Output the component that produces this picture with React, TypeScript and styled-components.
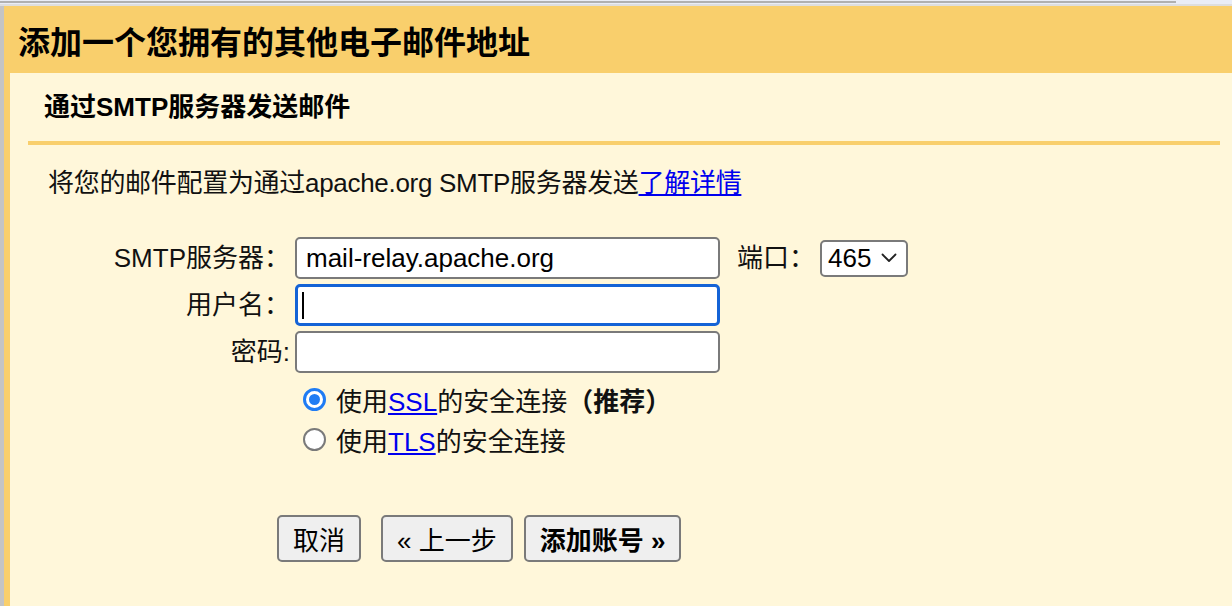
import React from "react";
import styled, { createGlobalStyle } from "styled-components";

const GlobalStyle = createGlobalStyle`
  html, body { margin: 0; padding: 0; }
  body { background: #fff7da; }
  * { box-sizing: border-box; }
`;

const FONT = `"Liberation Sans", "Noto Sans CJK SC", sans-serif`;

const Page = styled.div`
  width: 1232px;
  height: 606px;
  display: flex;
  flex-direction: column;
  overflow: hidden;
  font-family: ${FONT};
  color: #111;
`;

const TopStrip = styled.div`
  height: 6px;
  flex: none;
  background: linear-gradient(to bottom, #eaedf6 0 4px, #dedede 4px 6px);
  padding-top: 1px;
`;

const ScrollLine = styled.div`
  width: 1176px;
  height: 2px;
  background: #b0b0b0;
`;

const Main = styled.div`
  flex: 1;
  display: flex;
  min-height: 0;
`;

const LeftEdge = styled.div`
  width: 4px;
  flex: none;
  background: #c4c4c4;
`;

const Window = styled.div`
  flex: 1;
  display: flex;
  flex-direction: column;
  border-left: 6px solid #f9cf6c;
`;

const Header = styled.div`
  height: 67px;
  flex: none;
  background: #f9cf6c;
  padding: 7px 0 0 8px;
  font-size: 32px;
  font-weight: bold;
  line-height: 60px;
  color: #000;
`;

const Content = styled.div`
  flex: 1;
  background: #fff7da;
  padding: 0 12px 0 18px;
`;

const SubHeader = styled.div`
  padding: 16px 0 16px 16px;
  line-height: 36px;
  font-size: 26px;
  font-weight: bold;
  color: #000;
  border-bottom: 4px solid #f9cf6c;
`;

const Intro = styled.p`
  margin: 20px 0 0;
  padding-left: 20px;
  font-size: 26px;
  line-height: 36px;
  letter-spacing: -0.3px;
`;

const Link = styled.a`
  color: #0000ee;
  text-decoration: underline;
`;

const FormGrid = styled.div`
  margin-top: 36px;
  display: grid;
  grid-template-columns: 262px 425px auto auto;
  column-gap: 5px;
  row-gap: 5px;
  align-items: center;
  justify-content: start;
`;

const Label = styled.label<{ $pad?: number }>`
  text-align: right;
  font-size: 26px;
  line-height: 36px;
  white-space: nowrap;
  margin-left: ${(p) => p.$pad ?? 0}px;
`;

const FieldWrap = styled.div`
  position: relative;
  height: 42px;
`;

const TextInput = styled.input<{ $focused?: boolean }>`
  width: 425px;
  height: 42px;
  border: ${(p) => (p.$focused ? "3px solid #1463d6" : "2px solid #7a7a7a")};
  border-radius: 5px;
  background: #fff;
  padding: 0 ${(p) => (p.$focused ? 8 : 9)}px;
  font-family: ${FONT};
  font-size: 26px;
  color: #000;
  outline: none;
`;

const Caret = styled.span`
  position: absolute;
  left: 7px;
  top: 8px;
  width: 2px;
  height: 27px;
  background: #000;
`;

const PortSelect = styled.div`
  display: inline-flex;
  align-items: center;
  width: 88px;
  height: 37px;
  border: 2px solid #7a7a7a;
  border-radius: 5px;
  background: #fff;
  padding: 0 0 0 6px;
  gap: 10px;
  font-size: 26px;
  color: #000;
`;

const RadioList = styled.div`
  grid-column: 2 / span 3;
  margin-top: 1px;
  display: flex;
  flex-direction: column;
`;

const RadioRow = styled.label`
  height: 40px;
  display: flex;
  align-items: center;
  gap: 10px;
  padding-left: 8px;
  font-size: 26px;
  white-space: nowrap;
`;

const Radio = styled.input.attrs({ type: "radio" })`
  appearance: none;
  margin: 0;
  flex: none;
  width: 23px;
  height: 23px;
  border-radius: 50%;
  background: #fff;
  border: 2px solid #7a7a7a;
  display: grid;
  place-items: center;
  &:checked {
    border: 3px solid #1f7cf4;
  }
  &:checked::after {
    content: "";
    width: 11px;
    height: 11px;
    border-radius: 50%;
    background: #1f7cf4;
  }
`;

const Strong = styled.b`
  font-weight: bold;
`;

const ButtonRow = styled.div`
  margin-top: 56px;
  padding-left: 249px;
  display: flex;
  align-items: center;
`;

const Button = styled.button<{ $bold?: boolean; $gap?: number }>`
  height: 47px;
  padding: 0 14px;
  margin-right: ${(p) => p.$gap ?? 0}px;
  border: 2px solid #7a7a7a;
  border-radius: 5px;
  background: #efefef;
  font-family: ${FONT};
  font-size: 26px;
  font-weight: ${(p) => (p.$bold ? "bold" : "normal")};
  color: #000;
  white-space: nowrap;
`;

const Chevron = () => (
  <svg width="16" height="10" viewBox="0 0 16 10" fill="none">
    <path d="M1.5 1.5 L8 8 L14.5 1.5" stroke="#222" strokeWidth="1.8" strokeLinecap="round" strokeLinejoin="round" />
  </svg>
);

export default function App() {
  return (
    <>
      <GlobalStyle />
      <Page>
        <TopStrip>
          <ScrollLine />
        </TopStrip>
        <Main>
          <LeftEdge />
          <Window>
            <Header>添加一个您拥有的其他电子邮件地址</Header>
            <Content>
              <SubHeader>通过SMTP服务器发送邮件</SubHeader>
              <Intro>
                将您的邮件配置为通过apache.org SMTP服务器发送<Link href="#">了解详情</Link>
              </Intro>
              <FormGrid>
                <Label>SMTP服务器：</Label>
                <FieldWrap>
                  <TextInput defaultValue="mail-relay.apache.org" readOnly />
                </FieldWrap>
                <Label $pad={12}>端口：</Label>
                <PortSelect>
                  <span>465</span>
                  <Chevron />
                </PortSelect>

                <Label>用户名：</Label>
                <FieldWrap>
                  <TextInput $focused readOnly />
                  <Caret />
                </FieldWrap>
                <span />
                <span />

                <Label>密码:</Label>
                <FieldWrap>
                  <TextInput type="password" readOnly />
                </FieldWrap>
                <span />
                <span />

                <RadioList>
                  <RadioRow>
                    <Radio name="sec" defaultChecked />
                    <span>
                      使用<Link href="#">SSL</Link>的安全连接<Strong>（推荐）</Strong>
                    </span>
                  </RadioRow>
                  <RadioRow>
                    <Radio name="sec" />
                    <span>
                      使用<Link href="#">TLS</Link>的安全连接
                    </span>
                  </RadioRow>
                </RadioList>
              </FormGrid>
              <ButtonRow>
                <Button $gap={20}>取消</Button>
                <Button $gap={11}>« 上一步</Button>
                <Button $bold>添加账号 »</Button>
              </ButtonRow>
            </Content>
          </Window>
        </Main>
      </Page>
    </>
  );
}
